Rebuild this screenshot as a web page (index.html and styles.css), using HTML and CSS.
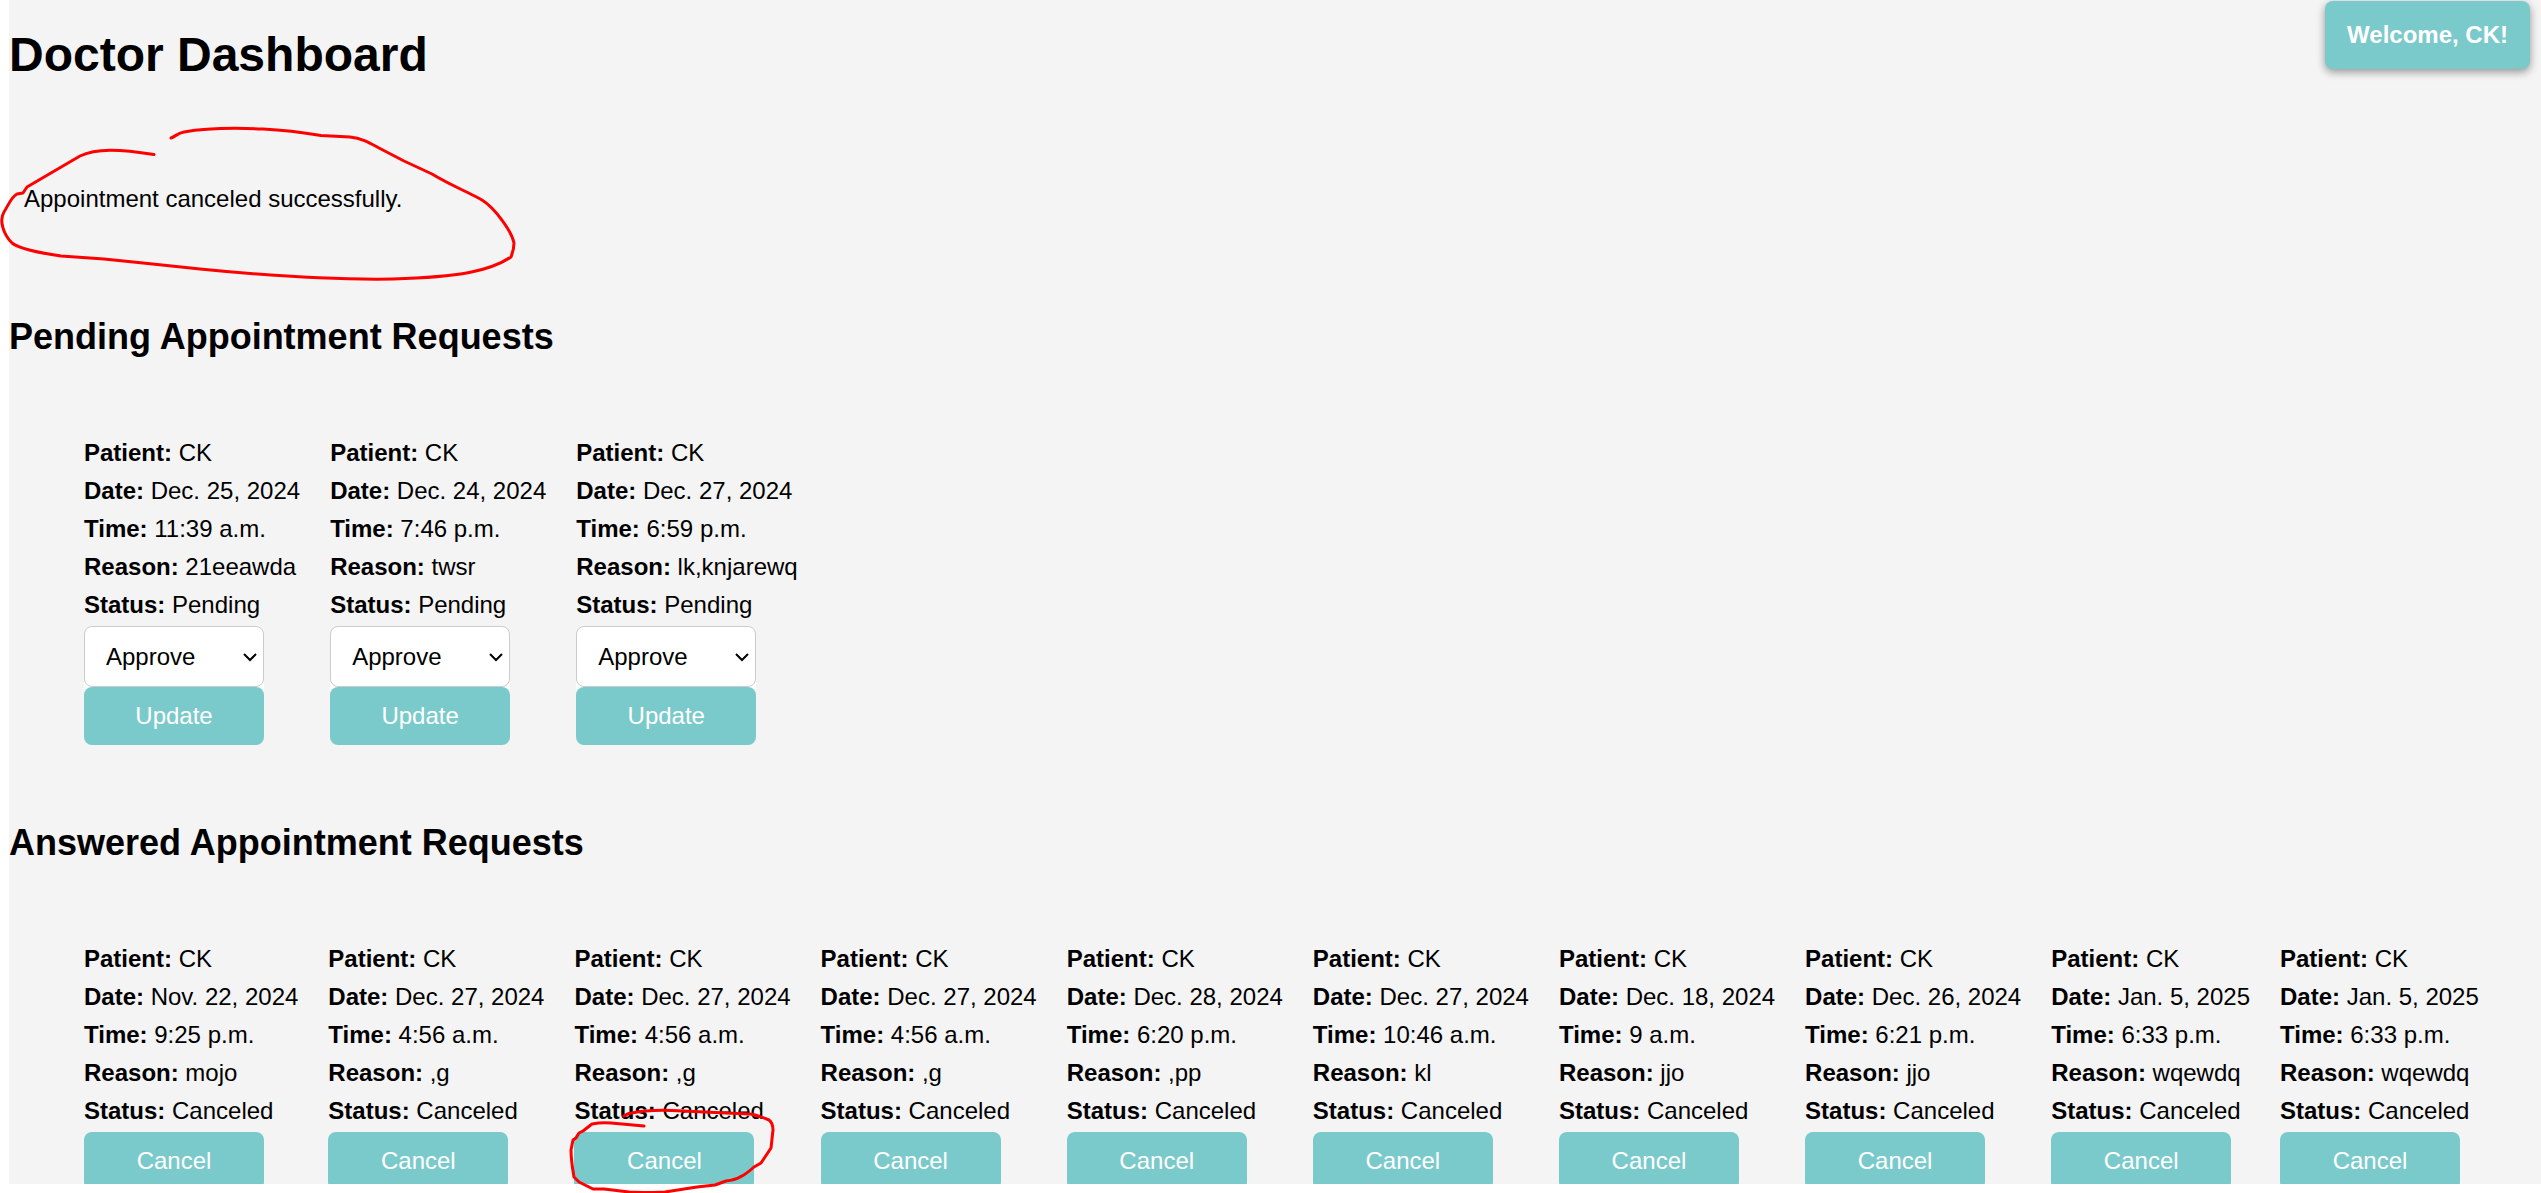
FILE: index.html
```html
<!DOCTYPE html>
<html lang="en">
<head>
<meta charset="utf-8">
<title>Doctor Dashboard</title>
<link rel="stylesheet" href="styles.css">
</head>
<body>
<main class="dashboard">
  <header class="top">
    <h1 class="title">Doctor Dashboard</h1>
    <div class="welcome">Welcome, CK!</div>
  </header>
  <p class="message" role="status">Appointment canceled successfully.</p>

  <section>
    <h2 class="heading">Pending Appointment Requests</h2>
    <ul class="cards">
      <li class="card">
        <p><strong>Patient:</strong> CK</p>
        <p><strong>Date:</strong> Dec. 25, 2024</p>
        <p><strong>Time:</strong> 11:39 a.m.</p>
        <p><strong>Reason:</strong> 21eeawda</p>
        <p><strong>Status:</strong> Pending</p>
        <form class="actions answer"><select class="choice" aria-label="Decision"><option>Approve</option><option>Reject</option></select><button class="button" type="button">Update</button></form>
      </li>
      <li class="card">
        <p><strong>Patient:</strong> CK</p>
        <p><strong>Date:</strong> Dec. 24, 2024</p>
        <p><strong>Time:</strong> 7:46 p.m.</p>
        <p><strong>Reason:</strong> twsr</p>
        <p><strong>Status:</strong> Pending</p>
        <form class="actions answer"><select class="choice" aria-label="Decision"><option>Approve</option><option>Reject</option></select><button class="button" type="button">Update</button></form>
      </li>
      <li class="card">
        <p><strong>Patient:</strong> CK</p>
        <p><strong>Date:</strong> Dec. 27, 2024</p>
        <p><strong>Time:</strong> 6:59 p.m.</p>
        <p><strong>Reason:</strong> lk,knjarewq</p>
        <p><strong>Status:</strong> Pending</p>
        <form class="actions answer"><select class="choice" aria-label="Decision"><option>Approve</option><option>Reject</option></select><button class="button" type="button">Update</button></form>
      </li>
    </ul>
  </section>

  <section>
    <h2 class="heading">Answered Appointment Requests</h2>
    <ul class="cards">
      <li class="card">
        <p><strong>Patient:</strong> CK</p>
        <p><strong>Date:</strong> Nov. 22, 2024</p>
        <p><strong>Time:</strong> 9:25 p.m.</p>
        <p><strong>Reason:</strong> mojo</p>
        <p><strong>Status:</strong> Canceled</p>
        <form class="actions"><button class="button" type="button">Cancel</button></form>
      </li>
      <li class="card">
        <p><strong>Patient:</strong> CK</p>
        <p><strong>Date:</strong> Dec. 27, 2024</p>
        <p><strong>Time:</strong> 4:56 a.m.</p>
        <p><strong>Reason:</strong> ,g</p>
        <p><strong>Status:</strong> Canceled</p>
        <form class="actions"><button class="button" type="button">Cancel</button></form>
      </li>
      <li class="card">
        <p><strong>Patient:</strong> CK</p>
        <p><strong>Date:</strong> Dec. 27, 2024</p>
        <p><strong>Time:</strong> 4:56 a.m.</p>
        <p><strong>Reason:</strong> ,g</p>
        <p><strong>Status:</strong> Canceled</p>
        <form class="actions"><button class="button" type="button">Cancel</button></form>
      </li>
      <li class="card">
        <p><strong>Patient:</strong> CK</p>
        <p><strong>Date:</strong> Dec. 27, 2024</p>
        <p><strong>Time:</strong> 4:56 a.m.</p>
        <p><strong>Reason:</strong> ,g</p>
        <p><strong>Status:</strong> Canceled</p>
        <form class="actions"><button class="button" type="button">Cancel</button></form>
      </li>
      <li class="card">
        <p><strong>Patient:</strong> CK</p>
        <p><strong>Date:</strong> Dec. 28, 2024</p>
        <p><strong>Time:</strong> 6:20 p.m.</p>
        <p><strong>Reason:</strong> ,pp</p>
        <p><strong>Status:</strong> Canceled</p>
        <form class="actions"><button class="button" type="button">Cancel</button></form>
      </li>
      <li class="card">
        <p><strong>Patient:</strong> CK</p>
        <p><strong>Date:</strong> Dec. 27, 2024</p>
        <p><strong>Time:</strong> 10:46 a.m.</p>
        <p><strong>Reason:</strong> kl</p>
        <p><strong>Status:</strong> Canceled</p>
        <form class="actions"><button class="button" type="button">Cancel</button></form>
      </li>
      <li class="card">
        <p><strong>Patient:</strong> CK</p>
        <p><strong>Date:</strong> Dec. 18, 2024</p>
        <p><strong>Time:</strong> 9 a.m.</p>
        <p><strong>Reason:</strong> jjo</p>
        <p><strong>Status:</strong> Canceled</p>
        <form class="actions"><button class="button" type="button">Cancel</button></form>
      </li>
      <li class="card">
        <p><strong>Patient:</strong> CK</p>
        <p><strong>Date:</strong> Dec. 26, 2024</p>
        <p><strong>Time:</strong> 6:21 p.m.</p>
        <p><strong>Reason:</strong> jjo</p>
        <p><strong>Status:</strong> Canceled</p>
        <form class="actions"><button class="button" type="button">Cancel</button></form>
      </li>
      <li class="card">
        <p><strong>Patient:</strong> CK</p>
        <p><strong>Date:</strong> Jan. 5, 2025</p>
        <p><strong>Time:</strong> 6:33 p.m.</p>
        <p><strong>Reason:</strong> wqewdq</p>
        <p><strong>Status:</strong> Canceled</p>
        <form class="actions"><button class="button" type="button">Cancel</button></form>
      </li>
      <li class="card">
        <p><strong>Patient:</strong> CK</p>
        <p><strong>Date:</strong> Jan. 5, 2025</p>
        <p><strong>Time:</strong> 6:33 p.m.</p>
        <p><strong>Reason:</strong> wqewdq</p>
        <p><strong>Status:</strong> Canceled</p>
        <form class="actions"><button class="button" type="button">Cancel</button></form>
      </li>
    </ul>
  </section>
</main>

<!-- Hand-drawn pen marks over the page -->
<svg class="marks" aria-hidden="true" fill="none" stroke="#f00" stroke-width="3" stroke-linecap="round" stroke-linejoin="round">
  <path d="M171 138C176 136 178 133 184 132C212 127 240 128 263 129C282 130 300 132 321 135.500L350 137C362 138 370 143 379 148L404 161L432 174C450 185 470 193 482 200C495 208 512 232 514 243C514 249 513 252 511 257C490 271 460 277 393 279C330 280 270 276 200 269L143 263L104 259L61 256C40 253 20 249 12 243C3 234 -1 220 4 212C8 206 11 197 17 194L23 193L27 187L80 156C96 148 120 149 154 154.500"/>
  <path d="M624 1116Q628 1113 632 1113Q650 1109 683 1111L726 1113L750 1114Q757 1115 769 1120Q773 1123 773 1130L771 1148L765 1157L761 1163L754 1167Q745 1175 740 1177Q735 1180 726 1181L715 1185L697 1187L665 1192Q640 1193 629 1192L604 1189L593 1189L579 1182L574 1177Q571 1160 571 1150L573 1140L576 1138L579 1133L583 1131L592 1124Q602 1122 611 1123L644 1126"/>
</svg>
</body>
</html>
```
FILE: styles.css
```css
* {
  box-sizing: border-box;
}

body {
  position: relative;
  margin: 0;
  height: 100vh;
  overflow: hidden;
  background: #fff;
  color: #000;
  font: 24px/38px "Liberation Sans", Arial, sans-serif;
}

h1,
h2,
p,
ul {
  margin: 0;
}

.dashboard {
  height: calc(100vh - 9px);
  margin-left: 9px;
  overflow: hidden;
  background: #f4f4f4;
}

.top {
  display: flex;
  justify-content: space-between;
  align-items: flex-start;
}

.title {
  padding-top: 27px;
  font-size: 48px;
  line-height: 56px;
}

.welcome {
  margin: 1px 11px 0 0;
  padding: 15px 22px;
  border-radius: 8px;
  background: #7bcacb;
  box-shadow: 0 3px 8px rgba(0, 0, 0, 0.4);
  color: #fff;
  font-weight: bold;
}

.message {
  padding: 97px 15px 98px;
}

.heading {
  font-size: 36px;
  line-height: 42px;
}

.cards {
  display: flex;
  gap: 30px;
  padding: 76px 75px 77px;
  list-style: none;
}

.card {
  flex: none;
}

.actions {
  display: flex;
  flex-direction: column;
  width: 180px;
  margin-top: 2px;
}

/* White patch where the select and the button corners meet */
.answer {
  background: linear-gradient(#fff, #fff) 0 56px / 100% 10px no-repeat;
}

.choice {
  appearance: none;
  height: 61px;
  padding: 0 21px;
  border: 1px solid #ccc;
  border-radius: 8px;
  background: #fff url("data:image/svg+xml,%3Csvg xmlns='http://www.w3.org/2000/svg' width='14' height='10' fill='none' stroke='black' stroke-width='2'%3E%3Cpath d='M1 2l6 6 6-6'/%3E%3C/svg%3E") right 6px center no-repeat;
  color: #000;
  font: inherit;
}

.button {
  height: 58px;
  padding: 0;
  border: 0;
  border-radius: 8px;
  background: #7bcacb;
  color: #fff;
  font: inherit;
}

.marks {
  position: absolute;
  inset: 0;
  width: 100%;
  height: 100%;
  pointer-events: none;
}
```
